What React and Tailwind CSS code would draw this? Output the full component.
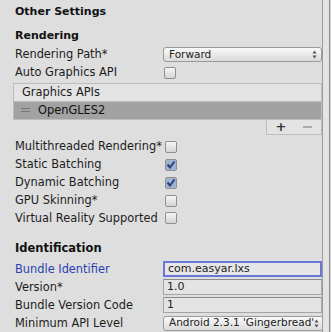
import React from 'react';

const font = { fontFamily: '"DejaVu Sans", Verdana, sans-serif' };

function Checkbox({ checked }) {
    return (
        <div className="w-[12px] h-[12px] border border-[#8f8f8f] rounded-[2px] bg-gradient-to-b from-[#f6f6f6] to-[#d4d4d4] flex items-center justify-center">
            {checked && (
                <svg width="10" height="10" viewBox="0 0 10 10">
                    <rect x="0" y="0" width="10" height="10" fill="#9fb2d0" />
                    <path d="M1.5 4.5 L4 7.5 L8.5 1.5" stroke="#26407a" strokeWidth="2" fill="none" />
                </svg>
            )}
        </div>
    );
}

function Arrows() {
    return (
        <svg width="5" height="9" viewBox="0 0 5 9" className="shrink-0">
            <path d="M2.5 0.5 L4.5 3.5 L0.5 3.5 Z" fill="#555" />
            <path d="M2.5 8.5 L4.5 5.5 L0.5 5.5 Z" fill="#555" />
        </svg>
    );
}

function Dropdown({ value }) {
    return (
        <div className="flex-1 h-[15px] border border-[#9a9a9a] rounded-[3px] bg-gradient-to-b from-[#fafafa] to-[#d9d9d9] flex items-center justify-between pl-[5px] pr-[4px] text-[10.5px] text-[#222]">
            <span className="whitespace-nowrap overflow-hidden">{value}</span>
            <Arrows />
        </div>
    );
}

function Field({ value, focused }) {
    return (
        <div className={`flex-1 h-[16px] flex items-center pl-[3px] text-[11px] text-[#222] ${focused ? 'border-2 border-[#6b77d6] bg-[#e6e6e6]' : 'border border-[#a5a5a5] border-t-[#8a8a8a] bg-[#e4e4e4]'}`}>
            {value}
        </div>
    );
}

function Row({ label, children, blue }) {
    return (
        <div className="h-[18px] flex items-center pl-[15px]">
            <div className={`w-[148px] shrink-0 whitespace-nowrap ${blue ? 'text-[#2a3fb0]' : 'text-[#1c1c1c]'}`}>{label}</div>
            {children}
        </div>
    );
}

function App() {
    return (
        <div className="w-[331px] h-[332px] bg-[#dedede] flex overflow-hidden text-[11.4px]" style={font}>
            <div className="w-[322px] shrink-0 flex flex-col pt-[3px]">
                <div className="h-[18px] flex items-center pl-[15px] font-bold text-[11px] text-[#111]">Other Settings</div>
                <div className="h-[6px]" />
                <div className="h-[19px] flex items-center pl-[15px] font-bold text-[11px] text-[#111]">Rendering</div>
                <Row label="Rendering Path*">
                    <Dropdown value="Forward" />
                </Row>
                <Row label="Auto Graphics API">
                    <div className="pl-[1px]"><Checkbox /></div>
                </Row>

                <div className="ml-[13px] mt-[1px] flex flex-col">
                    <div className="h-[19px] border border-[#bdbdbd] bg-[#e3e3e3] flex items-center pl-[8px] text-[#1c1c1c]">Graphics APIs</div>
                    <div className="border-x border-b border-[#bdbdbd] bg-[#e6e6e6]">
                        <div className="h-[17px] bg-[#a2a2a2] flex items-center gap-[8px] pl-[7px] text-[#111]">
                            <div className="flex flex-col gap-[2px]">
                                <div className="w-[9px] h-px bg-[#777]" />
                                <div className="w-[9px] h-px bg-[#777]" />
                            </div>
                            <span>OpenGLES2</span>
                        </div>
                    </div>
                    <div className="flex justify-end">
                        <div className="w-[56px] h-[15px] border-x border-b border-[#bdbdbd] bg-[#e3e3e3] flex items-center justify-around text-[#333]">
                            <span className="font-bold text-[13px] leading-none">+</span>
                            <div className="w-[9px] h-[2px] bg-[#aaa]" />
                        </div>
                    </div>
                </div>

                <div className="h-[3px]" />
                <Row label="Multithreaded Rendering*">
                    <div className="pl-[2px]"><Checkbox /></div>
                </Row>
                <Row label="Static Batching">
                    <div className="pl-[2px]"><Checkbox checked /></div>
                </Row>
                <Row label="Dynamic Batching">
                    <div className="pl-[2px]"><Checkbox checked /></div>
                </Row>
                <Row label="GPU Skinning*">
                    <div className="pl-[2px]"><Checkbox /></div>
                </Row>
                <Row label="Virtual Reality Supported">
                    <div className="pl-[2px]"><Checkbox /></div>
                </Row>

                <div className="h-[12px]" />
                <div className="h-[18px] flex items-center pl-[15px] font-bold text-[11.5px] text-[#111]">Identification</div>
                <div className="h-[3px]" />
                <Row label="Bundle Identifier" blue>
                    <Field value="com.easyar.lxs" focused />
                </Row>
                <Row label="Version*">
                    <Field value="1.0" />
                </Row>
                <Row label="Bundle Version Code">
                    <Field value="1" />
                </Row>
                <Row label="Minimum API Level">
                    <Dropdown value="Android 2.3.1 'Gingerbread'" />
                </Row>
            </div>
            <div className="w-px bg-[#9c9c9c]" />
            <div className="w-[6px] bg-[#e4e4e4]" />
            <div className="w-px bg-[#8a8a8a]" />
            <div className="flex-1 bg-[#d6d6d6]" />
        </div>
    );
}

export default App;
